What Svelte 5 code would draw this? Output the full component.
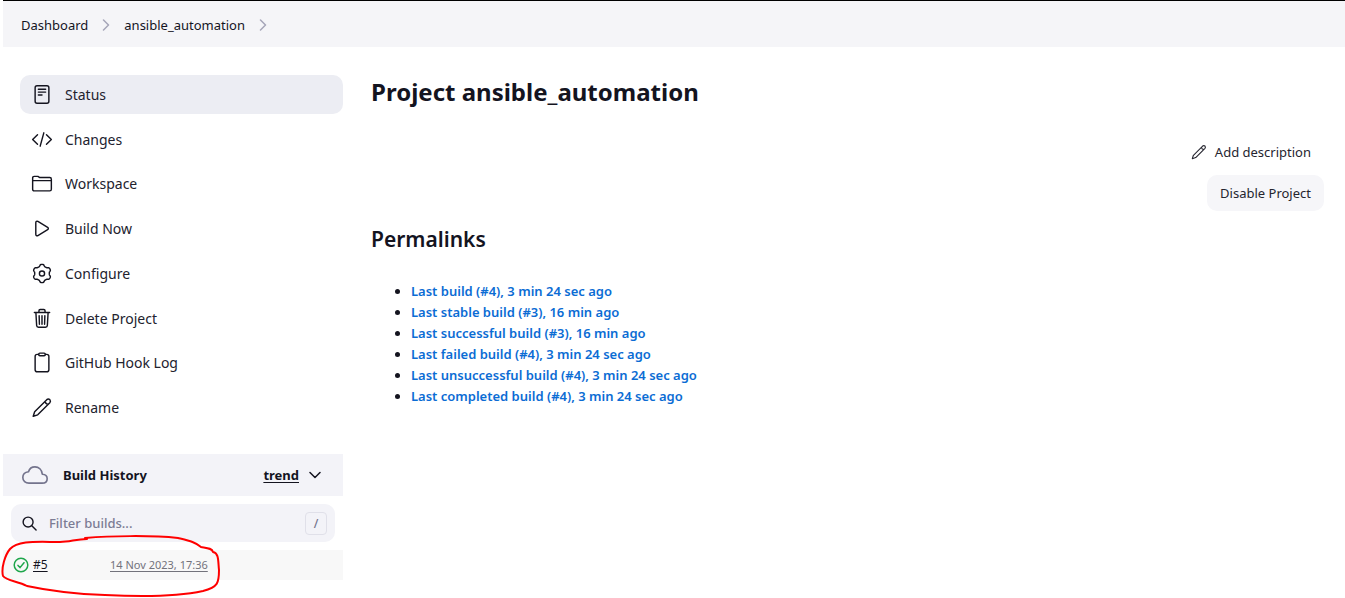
<script>
  const menu = [
    { label: 'Status', icon: 'status' },
    { label: 'Changes', icon: 'code' },
    { label: 'Workspace', icon: 'folder' },
    { label: 'Build Now', icon: 'play' },
    { label: 'Configure', icon: 'gear' },
    { label: 'Delete Project', icon: 'trash' },
    { label: 'GitHub Hook Log', icon: 'clipboard' },
    { label: 'Rename', icon: 'pencil' },
  ];

  const permalinks = [
    'Last build (#4), 3 min 24 sec ago',
    'Last stable build (#3), 16 min ago',
    'Last successful build (#3), 16 min ago',
    'Last failed build (#4), 3 min 24 sec ago',
    'Last unsuccessful build (#4), 3 min 24 sec ago',
    'Last completed build (#4), 3 min 24 sec ago',
  ];

  // Outline of a gear with six rounded teeth, centred in a 22 unit box.
  const gear =
    'M' +
    Array.from({ length: 144 }, (_, i) => {
      const a = (i / 144) * Math.PI * 2;
      const r = 8.6 + Math.tanh(1.8 * Math.cos(6 * a));
      return `${(11 + r * Math.sin(a)).toFixed(2)} ${(11 - r * Math.cos(a)).toFixed(2)}`;
    }).join('L') +
    'Z';
</script>

{#snippet icon(name)}
  <svg class="icon" viewBox="0 0 22 22" aria-hidden="true">
    {#if name === 'status'}
      <rect x="3.8" y="1.8" width="14.4" height="18.4" rx="2" />
      <path d="M7.2 5.5h7.6M7.2 8.5h7.600M7.2 11.500h3.800" />
    {:else if name === 'code'}
      <path d="M6.3 6L1.2 11l5.1 5M15.7 6l5.1 5-5.1 5M12.9 4l-3.8 14" />
    {:else if name === 'folder'}
      <path d="M1.2 17V5.2q0-1.7 1.7-1.7h3.8l2 1.3h10.4q1.7 0 1.7 1.7V17q0 1.7-1.7 1.7H2.9Q1.2 18.7 1.2 17zM1.2 8h19.6" />
    {:else if name === 'play'}
      <path d="M4.5 5v12c0 1.300 1 2 2.200 1.400l10.200-6.200c1-.6 1-1.800 0-2.400L6.700 3.600C5.500 3 4.500 3.700 4.500 5z" />
    {:else if name === 'gear'}
      <path d={gear} />
      <circle cx="11" cy="11" r="2.7" />
    {:else if name === 'trash'}
      <path d="M3 4.7h16M7.8 4.7V2.8q0-1.300 1.300-1.300h3.800q1.300 0 1.300 1.300v1.900M4.600 4.700l.8 13.600q.1 1.900 1.900 1.900h7.400q1.800 0 1.900-1.900l.8-13.600M8 8l.3 9M11 8v9M14 8l-.3 9" />
    {:else if name === 'clipboard'}
      <path d="M7.5 2.5H6q-2.200 0-2.200 2.200v13.800q0 2.200 2.200 2.200h10q2.200 0 2.200-2.200V4.700q0-2.200-2.200-2.200h-1.500" />
      <rect x="7.5" y="1.2" width="7" height="2.7" rx="1.3" />
    {:else}
      <path d="M1.800 20.200l1.500-4.700L16 2.800q1.600-1.300 3.200 0 1.300 1.600 0 3.200L6.500 18.700zM14.300 4.500q.4 2.800 3.200 3.200" />
    {/if}
  </svg>
{/snippet}

<div class="page">
  <nav class="crumbs" aria-label="Breadcrumb">
    <a href="#dashboard">Dashboard</a>
    <svg viewBox="0 0 8 12" aria-hidden="true"><path d="M1.5 1l5 5-5 5" /></svg>
    <a href="#project">ansible_automation</a>
    <svg viewBox="0 0 8 12" aria-hidden="true"><path d="M1.5 1l5 5-5 5" /></svg>
  </nav>

  <div class="columns">
    <aside>
      <nav class="menu" aria-label="Project">
        {#each menu as item, i}
          <a href="#{item.icon}" class:active={i === 0}>
            {@render icon(item.icon)}
            <span>{item.label}</span>
          </a>
        {/each}
      </nav>

      <section class="history">
        <header>
          <svg class="cloud" viewBox="0 0 512 512" aria-hidden="true">
            <path d="M400 240c-8.890-89.540-71-144-144-144-69 0-113.440 48.200-128 96-60 6-112 43.590-112 112 0 66 54 112 120 112h260c55 0 100-27.440 100-88 0-59.820-53-85.760-96-88z" />
          </svg>
          <h2>Build History</h2>
          <a href="#trend">trend</a>
          <svg class="chevron" viewBox="0 0 12 8" aria-hidden="true"><path d="M1 1.5l5 5 5-5" /></svg>
        </header>

        <label class="search">
          <svg viewBox="0 0 16 16" aria-hidden="true">
            <circle cx="6.500" cy="6.500" r="5.300" />
            <path d="M10.500 10.500l4.500 4.500" />
          </svg>
          <input type="text" placeholder="Filter builds..." aria-label="Filter builds" />
          <kbd>/</kbd>
        </label>

        <div class="build">
          <svg class="ok" viewBox="0 0 16 16" aria-hidden="true">
            <circle cx="8" cy="8" r="6.800" />
            <path d="M5 8.400l2 2.200 4-4.900" />
          </svg>
          <a class="number" href="#build-5">#5</a>
          <a class="date" href="#build-5">14 Nov 2023, 17:36</a>
          <svg class="mark" viewBox="0 0 222 64" aria-hidden="true">
            <path d="M85 4C110 2 150 1 178 4C190 7 195 8 201 13C207 14 212 14 213 18C219 19 218 27 219 36C219 49 218 53 203 57C180 62 143 63 105 61C75 60 50 57 27 52C18 47 7 47 3 42C1 34 5 21 10 15C18 6 38 8 60 8C70 8 76 5 87 5" />
          </svg>
        </div>
      </section>
    </aside>

    <main>
      <h1>Project ansible_automation</h1>
      <div class="actions">
        <button class="plain" type="button">{@render icon('pencil')}Add description</button>
        <button class="filled" type="button">Disable Project</button>
      </div>
      <h2>Permalinks</h2>
      <ul>
        {#each permalinks as link}
          <li><a href="#permalink">{link}</a></li>
        {/each}
      </ul>
    </main>
  </div>
</div>

<style>
  :global(body) {
    margin: 0;
    background: #fff;
  }
  .page {
    margin-left: 3px;
    padding-bottom: 18px;
    color: #14141f;
    font-family: 'Noto Sans', 'Open Sans', sans-serif;
    font-size: 13px;
    line-height: 21px;
  }
  a {
    color: inherit;
    text-decoration: none;
  }
  svg {
    flex: none;
    fill: none;
    stroke: currentColor;
    stroke-width: 1.5;
    stroke-linecap: round;
    stroke-linejoin: round;
  }
  .icon {
    width: 22px;
    height: 22px;
  }
  .crumbs {
    display: flex;
    align-items: center;
    gap: 14px;
    box-sizing: border-box;
    min-height: 47px;
    padding: 2px 18px 0;
    border-top: 1px solid #000;
    background: #f5f5f8;
  }
  .crumbs svg {
    width: 8px;
    height: 12px;
    color: #a6a6b8;
  }
  .columns {
    display: grid;
    grid-template-columns: 340px minmax(0, 1fr);
    column-gap: 28px;
  }
  .menu {
    display: flex;
    flex-direction: column;
    justify-content: space-between;
    min-height: 352px;
    padding: 28px 0 27px 17px;
  }
  .menu a {
    display: flex;
    align-items: center;
    gap: 12px;
    padding: 9px 11px;
    border-radius: 10px;
    font-size: 14px;
    color: #22222e;
  }
  .menu .icon {
    height: 21px;
    color: #14141f;
  }
  .menu .active {
    background: #ecedf3;
  }
  .history header {
    display: flex;
    align-items: center;
    padding: 8px 22px 8px 19px;
    background: #f3f3f8;
    font-weight: 700;
  }
  .history h2 {
    flex: 1;
    margin: 0 0 0 15px;
    font-size: 13px;
    font-weight: 700;
    line-height: 21px;
  }
  .history header a {
    text-decoration: underline;
    text-underline-offset: 2px;
  }
  .cloud {
    width: 26px;
    height: 26px;
    color: #73738c;
    stroke-width: 32;
  }
  .chevron {
    width: 12px;
    height: 8px;
    margin-left: 10px;
  }
  .search {
    display: flex;
    align-items: center;
    gap: 12px;
    margin: 8px;
    padding: 8px 8px 7px 11px;
    border-radius: 10px;
    background: #f3f3f8;
  }
  .search svg {
    width: 15px;
    height: 15px;
  }
  .search input {
    flex: 1;
    min-width: 0;
    padding: 0;
    border: 0;
    outline: 0;
    background: transparent;
    color: inherit;
    font: 500 13px/21px 'Noto Sans', 'Open Sans', sans-serif;
  }
  .search input::placeholder {
    color: #7c7c94;
    opacity: 1;
  }
  kbd {
    width: 20px;
    border: 1px solid #e0e0e9;
    border-radius: 4px;
    color: #73738c;
    font: 500 12px/21px 'Noto Sans', sans-serif;
    text-align: center;
  }
  .build {
    position: relative;
    display: flex;
    align-items: center;
    padding: 4px 10px 5px;
    background: #f8f8f8;
    font-size: 12px;
  }
  .build a {
    text-decoration: underline;
    text-underline-offset: 2px;
  }
  .ok {
    width: 16px;
    height: 16px;
    margin-right: 4px;
    color: #1ea64b;
  }
  .number {
    width: 77px;
  }
  .date {
    color: #73737c;
    font-size: 11px;
  }
  .mark {
    position: absolute;
    top: -16px;
    left: -3px;
    width: 222px;
    height: 64px;
    color: #f00;
    stroke-width: 2;
    pointer-events: none;
  }
  main {
    padding: 28px 21px 0 0;
  }
  h1,
  main h2 {
    margin: 0;
    font-weight: 600;
  }
  h1 {
    font-size: 24px;
    font-weight: 700;
    line-height: 34px;
  }
  main h2 {
    margin: 11px 0 25px;
    font-size: 21px;
    line-height: 34px;
  }
  .actions {
    display: flex;
    flex-direction: column;
    align-items: flex-end;
    gap: 5px;
    padding-top: 25px;
  }
  button {
    display: flex;
    align-items: center;
    gap: 8px;
    min-height: 36px;
    padding: 0 13px;
    border: 0;
    border-radius: 10px;
    background: transparent;
    color: #25252f;
    font: 400 13px/21px 'Noto Sans', 'Open Sans', sans-serif;
  }
  .filled {
    background: #f6f6f9;
  }
  .plain .icon {
    width: 16px;
    height: 16px;
  }
  ul {
    margin: 0;
    padding-left: 40px;
  }
  li a {
    color: #0b6cd4;
    font-weight: 600;
  }
</style>
